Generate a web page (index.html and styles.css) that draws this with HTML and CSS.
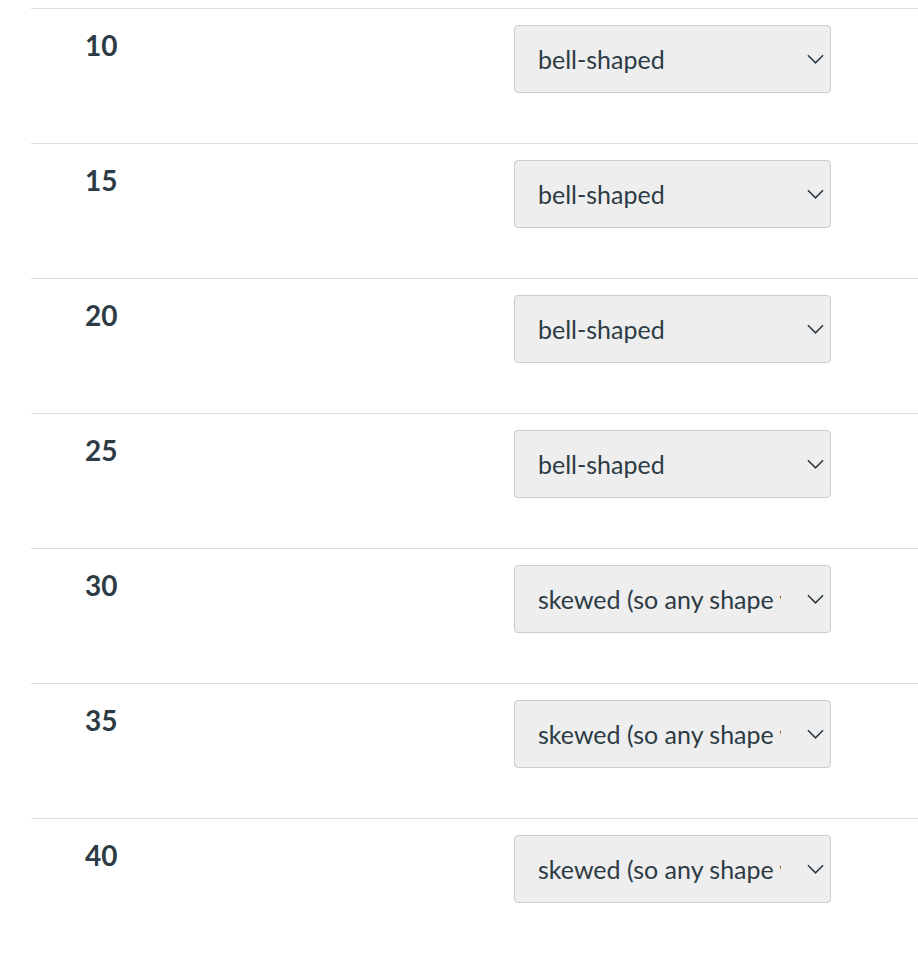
FILE: index.html
```html
<!DOCTYPE html>
<html lang="en">
<head>
<meta charset="utf-8">
<link rel="stylesheet" href="styles.css">
</head>
<body>
<div class="list">
  <div class="row">
    <div class="num">10</div>
    <div class="field"><select class="dd"><option>bell-shaped</option></select><svg class="chev" viewBox="0 0 18 10"><path d="M1 1 L9 9 L17 1"/></svg></div>
  </div>
  <div class="row">
    <div class="num">15</div>
    <div class="field"><select class="dd"><option>bell-shaped</option></select><svg class="chev" viewBox="0 0 18 10"><path d="M1 1 L9 9 L17 1"/></svg></div>
  </div>
  <div class="row">
    <div class="num">20</div>
    <div class="field"><select class="dd"><option>bell-shaped</option></select><svg class="chev" viewBox="0 0 18 10"><path d="M1 1 L9 9 L17 1"/></svg></div>
  </div>
  <div class="row">
    <div class="num">25</div>
    <div class="field"><select class="dd"><option>bell-shaped</option></select><svg class="chev" viewBox="0 0 18 10"><path d="M1 1 L9 9 L17 1"/></svg></div>
  </div>
  <div class="row">
    <div class="num">30</div>
    <div class="field"><select class="dd"><option>skewed (so any shape will do)</option></select><svg class="chev" viewBox="0 0 18 10"><path d="M1 1 L9 9 L17 1"/></svg></div>
  </div>
  <div class="row">
    <div class="num">35</div>
    <div class="field"><select class="dd"><option>skewed (so any shape will do)</option></select><svg class="chev" viewBox="0 0 18 10"><path d="M1 1 L9 9 L17 1"/></svg></div>
  </div>
  <div class="row">
    <div class="num">40</div>
    <div class="field"><select class="dd"><option>skewed (so any shape will do)</option></select><svg class="chev" viewBox="0 0 18 10"><path d="M1 1 L9 9 L17 1"/></svg></div>
  </div>
</div>
</body>
</html>
```
FILE: styles.css
```css
html, body {
  margin: 0;
  padding: 0;
  background: #ffffff;
}
body {
  font-family: Lato, "Liberation Sans", sans-serif;
  color: #2d3b45;
}
.list {
  padding-top: 8px;
  padding-left: 31px;
}
.row {
  display: flex;
  align-items: flex-start;
  height: 134px;
  border-top: 1px solid #dddddd;
}
.num {
  width: 429px;
  padding-left: 54px;
  padding-top: 20px;
  font-size: 28px;
  font-weight: 700;
  line-height: 32px;
}
.field {
  position: relative;
  margin-top: 16px;
  width: 317px;
  height: 68px;
}
.dd {
  -webkit-appearance: none;
  appearance: none;
  box-sizing: border-box;
  width: 317px;
  height: 68px;
  margin: 0;
  padding: 0 49px 0 23px;
  border: 1px solid #c7cdd1;
  border-radius: 4px;
  background: #eeeeee;
  color: #2d3b45;
  font-family: Lato, "Liberation Sans", sans-serif;
  font-size: 25px;
}
.chev {
  position: absolute;
  right: 7px;
  top: 29px;
  width: 17px;
  height: 10px;
  fill: none;
  stroke: #2d3b45;
  stroke-width: 1.7;
  pointer-events: none;
}
```
